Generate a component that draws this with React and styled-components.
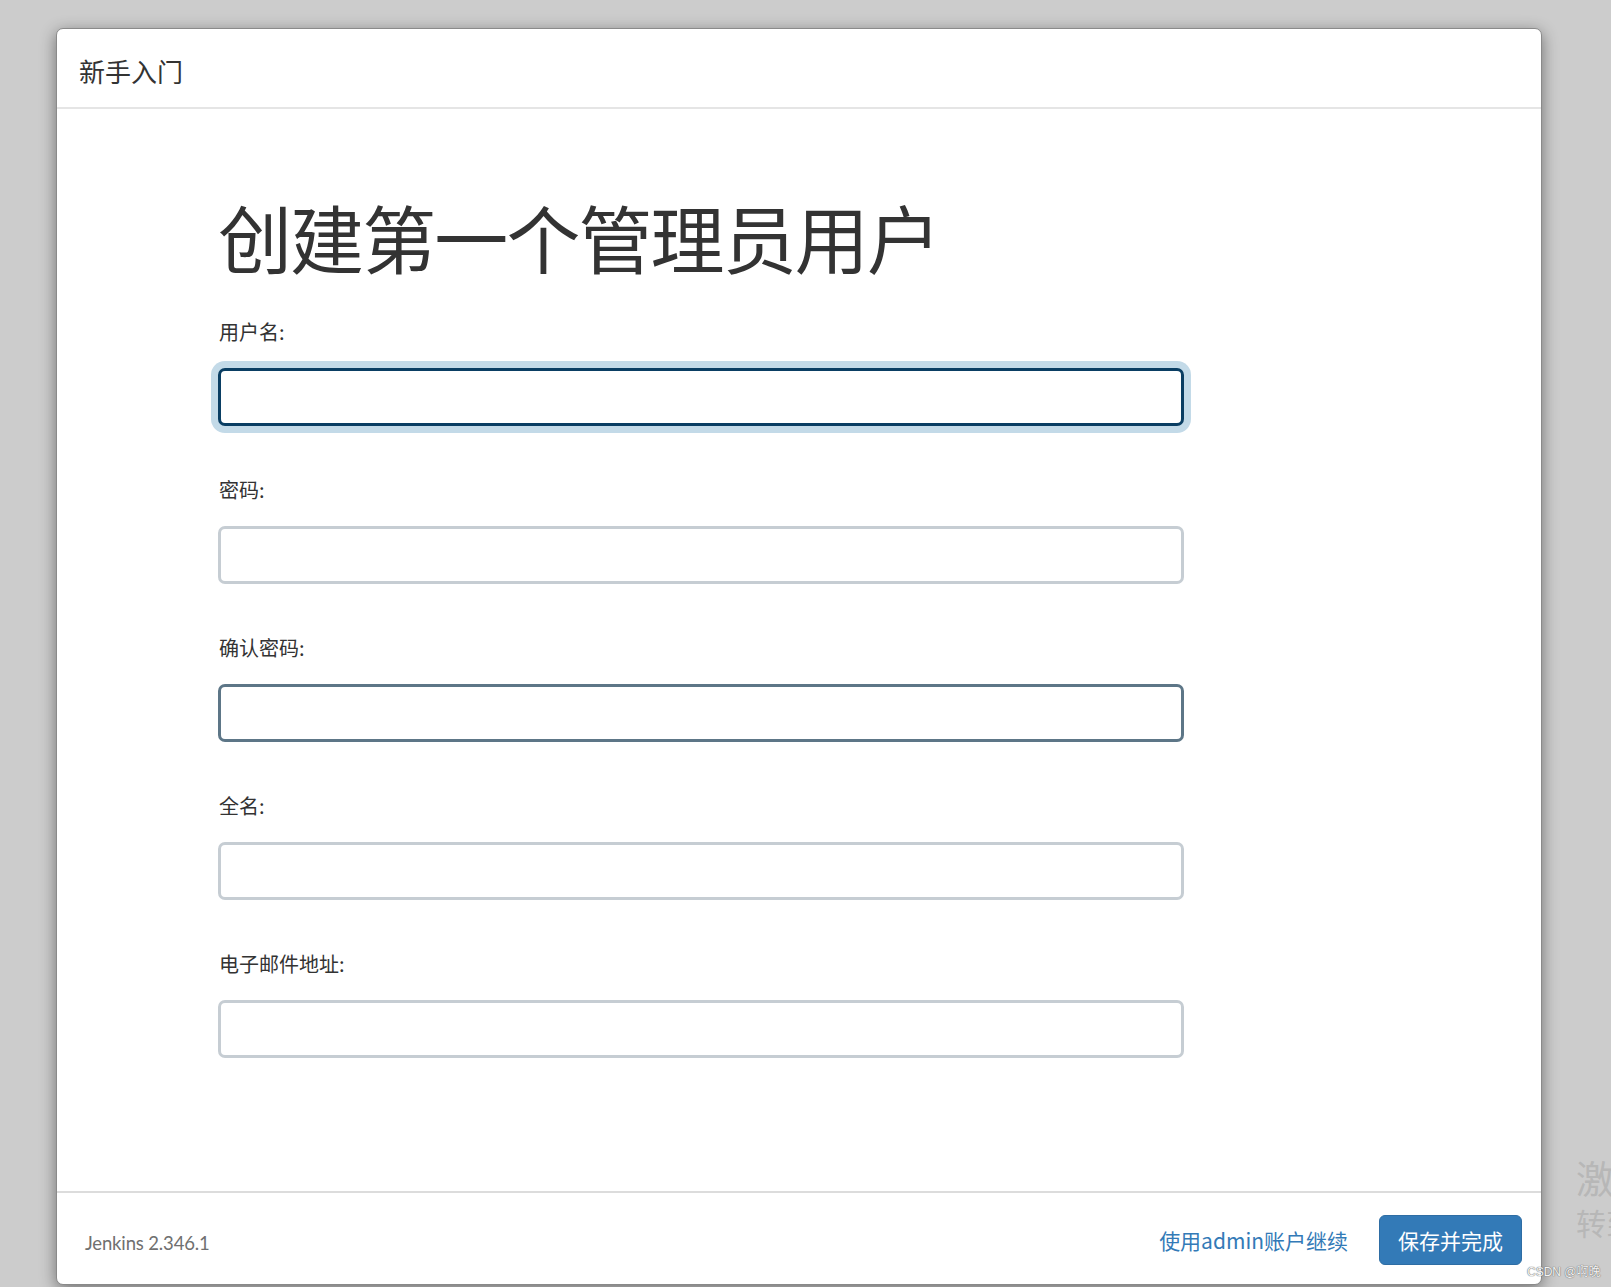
import React from "react";
import styled, { createGlobalStyle } from "styled-components";

const GlobalStyle = createGlobalStyle`
  html, body {
    margin: 0;
    padding: 0;
    background: #cccccc;
    overflow: hidden;
    font-family: "Noto Sans CJK SC", "Noto Sans", sans-serif;
  }
  * { box-sizing: border-box; }
`;

const Page = styled.div`
  position: relative;
  width: 1611px;
  height: 1287px;
  padding: 28px 0 0 56px;
  overflow: hidden;
`;

const Dialog = styled.div`
  position: relative;
  z-index: 1;
  width: 1486px;
  height: 1257px;
  background: #fff;
  border: 1px solid #8a8a8a;
  border-radius: 7px;
  box-shadow: 0 4px 16px rgba(0, 0, 0, 0.45);
  display: flex;
  flex-direction: column;
`;

const Header = styled.div`
  height: 80px;
  flex: none;
  display: flex;
  align-items: center;
  padding: 6px 0 0 22px;
  border-bottom: 2px solid #e5e5e5;
`;

const HeaderTitle = styled.h4`
  margin: 0;
  font-size: 26px;
  font-weight: 400;
  color: #333;
  line-height: 1;
`;

const Body = styled.div`
  flex: 1;
  padding: 87px 0 0 161px;
`;

const Title = styled.h1`
  margin: 0 0 42px;
  font-size: 74px;
  line-height: 80px;
  font-weight: 400;
  letter-spacing: -1.9px;
  color: #333;
`;

const Field = styled.div`
  display: flex;
  flex-direction: column;
  width: 966px;
  margin-bottom: 50px;
`;

const Label = styled.label`
  font-size: 20px;
  line-height: 28px;
  color: #333;
  margin-bottom: 22px;
  padding-left: 1px;
`;

const Input = styled.input`
  height: 58px;
  width: 966px;
  border: 3px solid ${(p) => p.$border};
  border-radius: 7px;
  background: #fff;
  outline: none;
  box-shadow: ${(p) => (p.$focus ? "0 0 0 7px #c3dae8" : "none")};
  font-size: 20px;
  padding: 0 12px;
`;

const Footer = styled.div`
  flex: none;
  height: 93px;
  border-top: 2px solid #dcdcdc;
  display: flex;
  align-items: center;
  padding: 0 19px 0 28px;
`;

const Version = styled.span`
  font-family: Lato, "Noto Sans", sans-serif;
  font-size: 18.5px;
  letter-spacing: -0.15px;
  color: #707070;
  margin-top: 8px;
`;

const Spacer = styled.div`
  flex: 1;
`;

const LinkButton = styled.a`
  font-size: 21px;
  color: #337ab7;
  text-decoration: none;
  margin-right: 31px;
  margin-top: 2px;
  cursor: pointer;
`;

const PrimaryButton = styled.button`
  height: 50px;
  padding: 0 18px;
  background: #337ab7;
  border: 1px solid #2e6da4;
  border-radius: 6px;
  color: #fff;
  font-family: "Noto Sans CJK SC", sans-serif;
  font-size: 21px;
  cursor: pointer;
  margin-top: 2px;
`;

const Activation = styled.div`
  position: absolute;
  left: 1576px;
  top: 1152px;
  color: #b7b7b7;
  white-space: nowrap;
  z-index: 0;
`;

const ActLine = styled.div`
  font-size: ${(p) => p.$size}px;
  line-height: ${(p) => p.$lh}px;
`;

const Watermark = styled.div`
  position: absolute;
  left: 1527px;
  top: 1264px;
  z-index: 2;
  font-family: "Liberation Sans", "Noto Sans CJK SC", sans-serif;
  font-size: 12px;
  line-height: 16px;
  color: #f4f4f4;
  text-shadow: 0 0 1px #666, 0 0 1px #666;
  white-space: nowrap;
`;

const fields = [
  { label: "用户名:", border: "#0a3e63", focus: true, type: "text" },
  { label: "密码:", border: "#c6cdd3", type: "password" },
  { label: "确认密码:", border: "#5d7687", type: "password" },
  { label: "全名:", border: "#c6cdd3", type: "text" },
  { label: "电子邮件地址:", border: "#c6cdd3", type: "text" },
];

export default function App() {
  return (
    <>
      <GlobalStyle />
      <Page>
        <Dialog>
          <Header>
            <HeaderTitle>新手入门</HeaderTitle>
          </Header>
          <Body>
            <Title>创建第一个管理员用户</Title>
            {fields.map((f) => (
              <Field key={f.label}>
                <Label>{f.label}</Label>
                <Input type={f.type} $border={f.border} $focus={f.focus} />
              </Field>
            ))}
          </Body>
          <Footer>
            <Version>Jenkins 2.346.1</Version>
            <Spacer />
            <LinkButton>使用admin账户继续</LinkButton>
            <PrimaryButton>保存并完成</PrimaryButton>
          </Footer>
        </Dialog>
        <Activation>
          <ActLine $size={38} $lh={50}>激活 Windows</ActLine>
          <ActLine $size={30} $lh={40}>转到“设置”以激活 Windows。</ActLine>
        </Activation>
        <Watermark>CSDN @啊晚</Watermark>
      </Page>
    </>
  );
}
